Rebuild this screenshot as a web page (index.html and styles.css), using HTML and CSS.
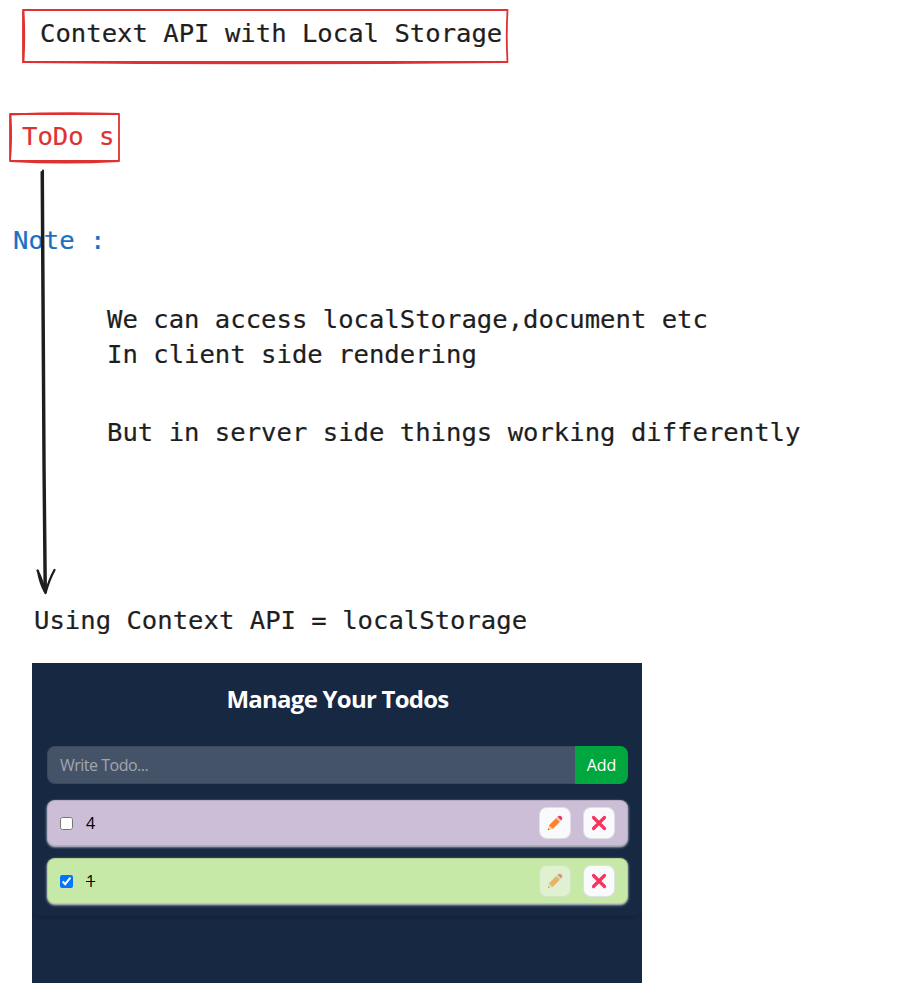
FILE: index.html
```html
<!DOCTYPE html>
<html lang="en">
<head>
<meta charset="utf-8">
<title>Context API with Local Storage</title>
<link rel="stylesheet" href="styles.css">
</head>
<body>
<main class="board">
  <svg class="sketch" width="906" height="993" viewBox="0 0 906 993" fill="none" stroke-linecap="round" stroke-linejoin="round" aria-hidden="true">
    <g stroke="#e03131" stroke-width="1.8">
      <path d="M23 10H507.500M507.500 10Q506 36 507.500 62M507 62H23M23 62V10M23.500 10Q25 36 23.500 62"/>
      <path d="M23 62Q265 64.500 507 62"/>
      <path d="M10 114H119V161H10ZM10 114.500Q65 112 119 114M10 161Q65 164 119 161M10.500 114Q12 138 10 161"/>
    </g>
  </svg>
  <h1 class="note note-title">Context API with Local Storage</h1>
  <p class="note note-todos">ToDo s</p>
  <p class="note note-label">Note :</p>
  <p class="note note-client">We can access localStorage,document etc<br>In client side rendering</p>
  <p class="note note-server">But in server side things working differently</p>
  <p class="note note-using">Using Context API = localStorage</p>
  <svg class="sketch" width="906" height="993" viewBox="0 0 906 993" fill="none" stroke="#1e1e1e" stroke-linecap="round" stroke-linejoin="round" aria-hidden="true">
    <path stroke-width="2" d="M41.500 172C42 300 43 450 44.500 591M43 170.500C43 300 44.500 450 46 592M42.500 180C43.500 310 43.700 450 45.500 590"/>
    <path stroke-width="2.300" d="M37.500 570.500Q42 579 45.500 593Q49 580 54.500 570M38 571Q40 583 45 592M54 571Q50 578 46 591"/>
  </svg>

  <section class="app">
    <div class="panel">
      <h2 class="app-title">Manage Your Todos</h2>
      <form class="entry">
        <input class="entry-input" type="text" placeholder="Write Todo...">
        <button class="entry-add" type="button">Add</button>
      </form>
      <div class="todo">
        <input class="check" type="checkbox" aria-label="4">
        <span class="todo-text">4</span>
        <button class="action" type="button" aria-label="Edit"><svg width="16" height="16" viewBox="0 0 16 16"><path fill="#ffce7c" d="M.8 15.200L2 10.300L5.700 14Z"/><path fill="#ff822d" d="M2 10.300L9.200 3.100L12.900 6.800L5.700 14Z"/><path fill="#d3d3d3" d="M9.200 3.100L10.500 1.800L14.200 5.500L12.900 6.800Z"/><path fill="#f8315f" d="M10.500 1.800Q12.500-.1 14.500 1.500Q16.100 3.500 14.200 5.500Z"/><path fill="#636363" d="M.8 15.200L1.200 13.500L2.500 14.800Z"/></svg></button>
        <button class="action" type="button" aria-label="Delete"><svg width="16" height="16" viewBox="0 0 16 16"><path d="M2.500 2.500L13.500 13.500M13.500 2.500L2.500 13.500" stroke="#f8315f" stroke-width="3.200" stroke-linecap="round"/></svg></button>
      </div>
      <div class="todo todo-done">
        <input class="check" type="checkbox" aria-label="1" checked>
        <span class="todo-text">1</span>
        <button class="action" type="button" aria-label="Edit" disabled><svg width="16" height="16" viewBox="0 0 16 16"><path fill="#ffce7c" d="M.8 15.200L2 10.300L5.700 14Z"/><path fill="#ff822d" d="M2 10.300L9.200 3.100L12.900 6.800L5.700 14Z"/><path fill="#d3d3d3" d="M9.200 3.100L10.500 1.800L14.200 5.500L12.900 6.800Z"/><path fill="#f8315f" d="M10.500 1.800Q12.500-.1 14.500 1.500Q16.100 3.500 14.200 5.500Z"/><path fill="#636363" d="M.8 15.200L1.200 13.500L2.500 14.800Z"/></svg></button>
        <button class="action" type="button" aria-label="Delete"><svg width="16" height="16" viewBox="0 0 16 16"><path d="M2.500 2.500L13.500 13.500M13.500 2.500L2.500 13.500" stroke="#f8315f" stroke-width="3.200" stroke-linecap="round"/></svg></button>
      </div>
    </div>
  </section>
</main>
</body>
</html>
```
FILE: styles.css
```css
* { box-sizing: border-box; }

body {
  margin: 0;
  background: #fff;
}

.board {
  position: relative;
  width: 906px;
  height: 993px;
  overflow: hidden;
}

.sketch {
  position: absolute;
  left: 0;
  top: 0;
  pointer-events: none;
}

/* Handwritten labels placed freely on the canvas */
.note {
  position: absolute;
  margin: 0;
  color: #1e1e1e;
  font: 400 25.6px/35px "DejaVu Sans Mono", monospace;
  -webkit-text-stroke: .2px currentColor;
  white-space: pre;
}

.note-title { left: 40px; top: 16px; }
.note-todos { left: 22px; top: 119px; color: #e03131; }
.note-label { left: 13px; top: 223px; color: #1971c2; }
.note-client { left: 107px; top: 302px; }
.note-server { left: 107px; top: 415px; }
.note-using { left: 34px; top: 603px; }

.app {
  position: absolute;
  left: 32px;
  top: 663px;
  width: 610px;
  height: 320px;
  overflow: hidden;
  background: #172842;
  color: #fff;
  font-family: "Open Sans", "Noto Sans", sans-serif;
}

.panel {
  height: 253px;
  padding: 20px 14px 0 15px;
  border-radius: 8px;
  box-shadow: 0 2px 4px rgba(0, 0, 0, .14);
}

.app-title {
  margin: 0 0 31px;
  font-size: 24px;
  font-weight: 700;
  line-height: 32px;
  letter-spacing: -0.75px;
  text-align: center;
}

.entry {
  display: flex;
  height: 38px;
  margin: 0 0 16px;
}

.entry-input {
  flex: 1;
  min-width: 0;
  padding: 0 12px;
  border: 1px solid #3b485d;
  border-right: 0;
  border-radius: 8px 0 0 8px;
  background: #455368;
  color: #fff;
  font: 16px "Open Sans", "Noto Sans", sans-serif;
  letter-spacing: -0.5px;
}

.entry-input::placeholder { color: #a0a6af; opacity: 1; }

.entry-add {
  width: 53px;
  padding: 0;
  border: 0;
  border-radius: 0 8px 8px 0;
  background: #00a63e;
  color: #fff;
  font: 16px "Open Sans", "Noto Sans", sans-serif;
}

.todo {
  display: flex;
  align-items: center;
  height: 46px;
  margin-bottom: 12px;
  padding: 0 13px;
  border: 1px solid rgba(0, 0, 0, .1);
  border-radius: 8px;
  background: #ccbed7;
  box-shadow: 0 1px 3px rgba(255, 255, 255, .5), 0 1px 2px rgba(255, 255, 255, .5);
  color: #000;
  font-size: 16px;
}

.todo-done { background: #c6e9a7; }
.todo-done .todo-text { text-decoration: line-through; }

.check {
  width: 13px;
  height: 13px;
  margin: 0 13px 0 -1px;
}

.todo-text { flex: 1; }

.action {
  display: flex;
  align-items: center;
  justify-content: center;
  width: 32px;
  height: 32px;
  margin-left: 12px;
  padding: 0;
  border: 1px solid rgba(0, 0, 0, .1);
  border-radius: 8px;
  background: #f9fafb;
}

.action:last-child { margin-right: -1px; }
.action:disabled { opacity: .5; }
```
